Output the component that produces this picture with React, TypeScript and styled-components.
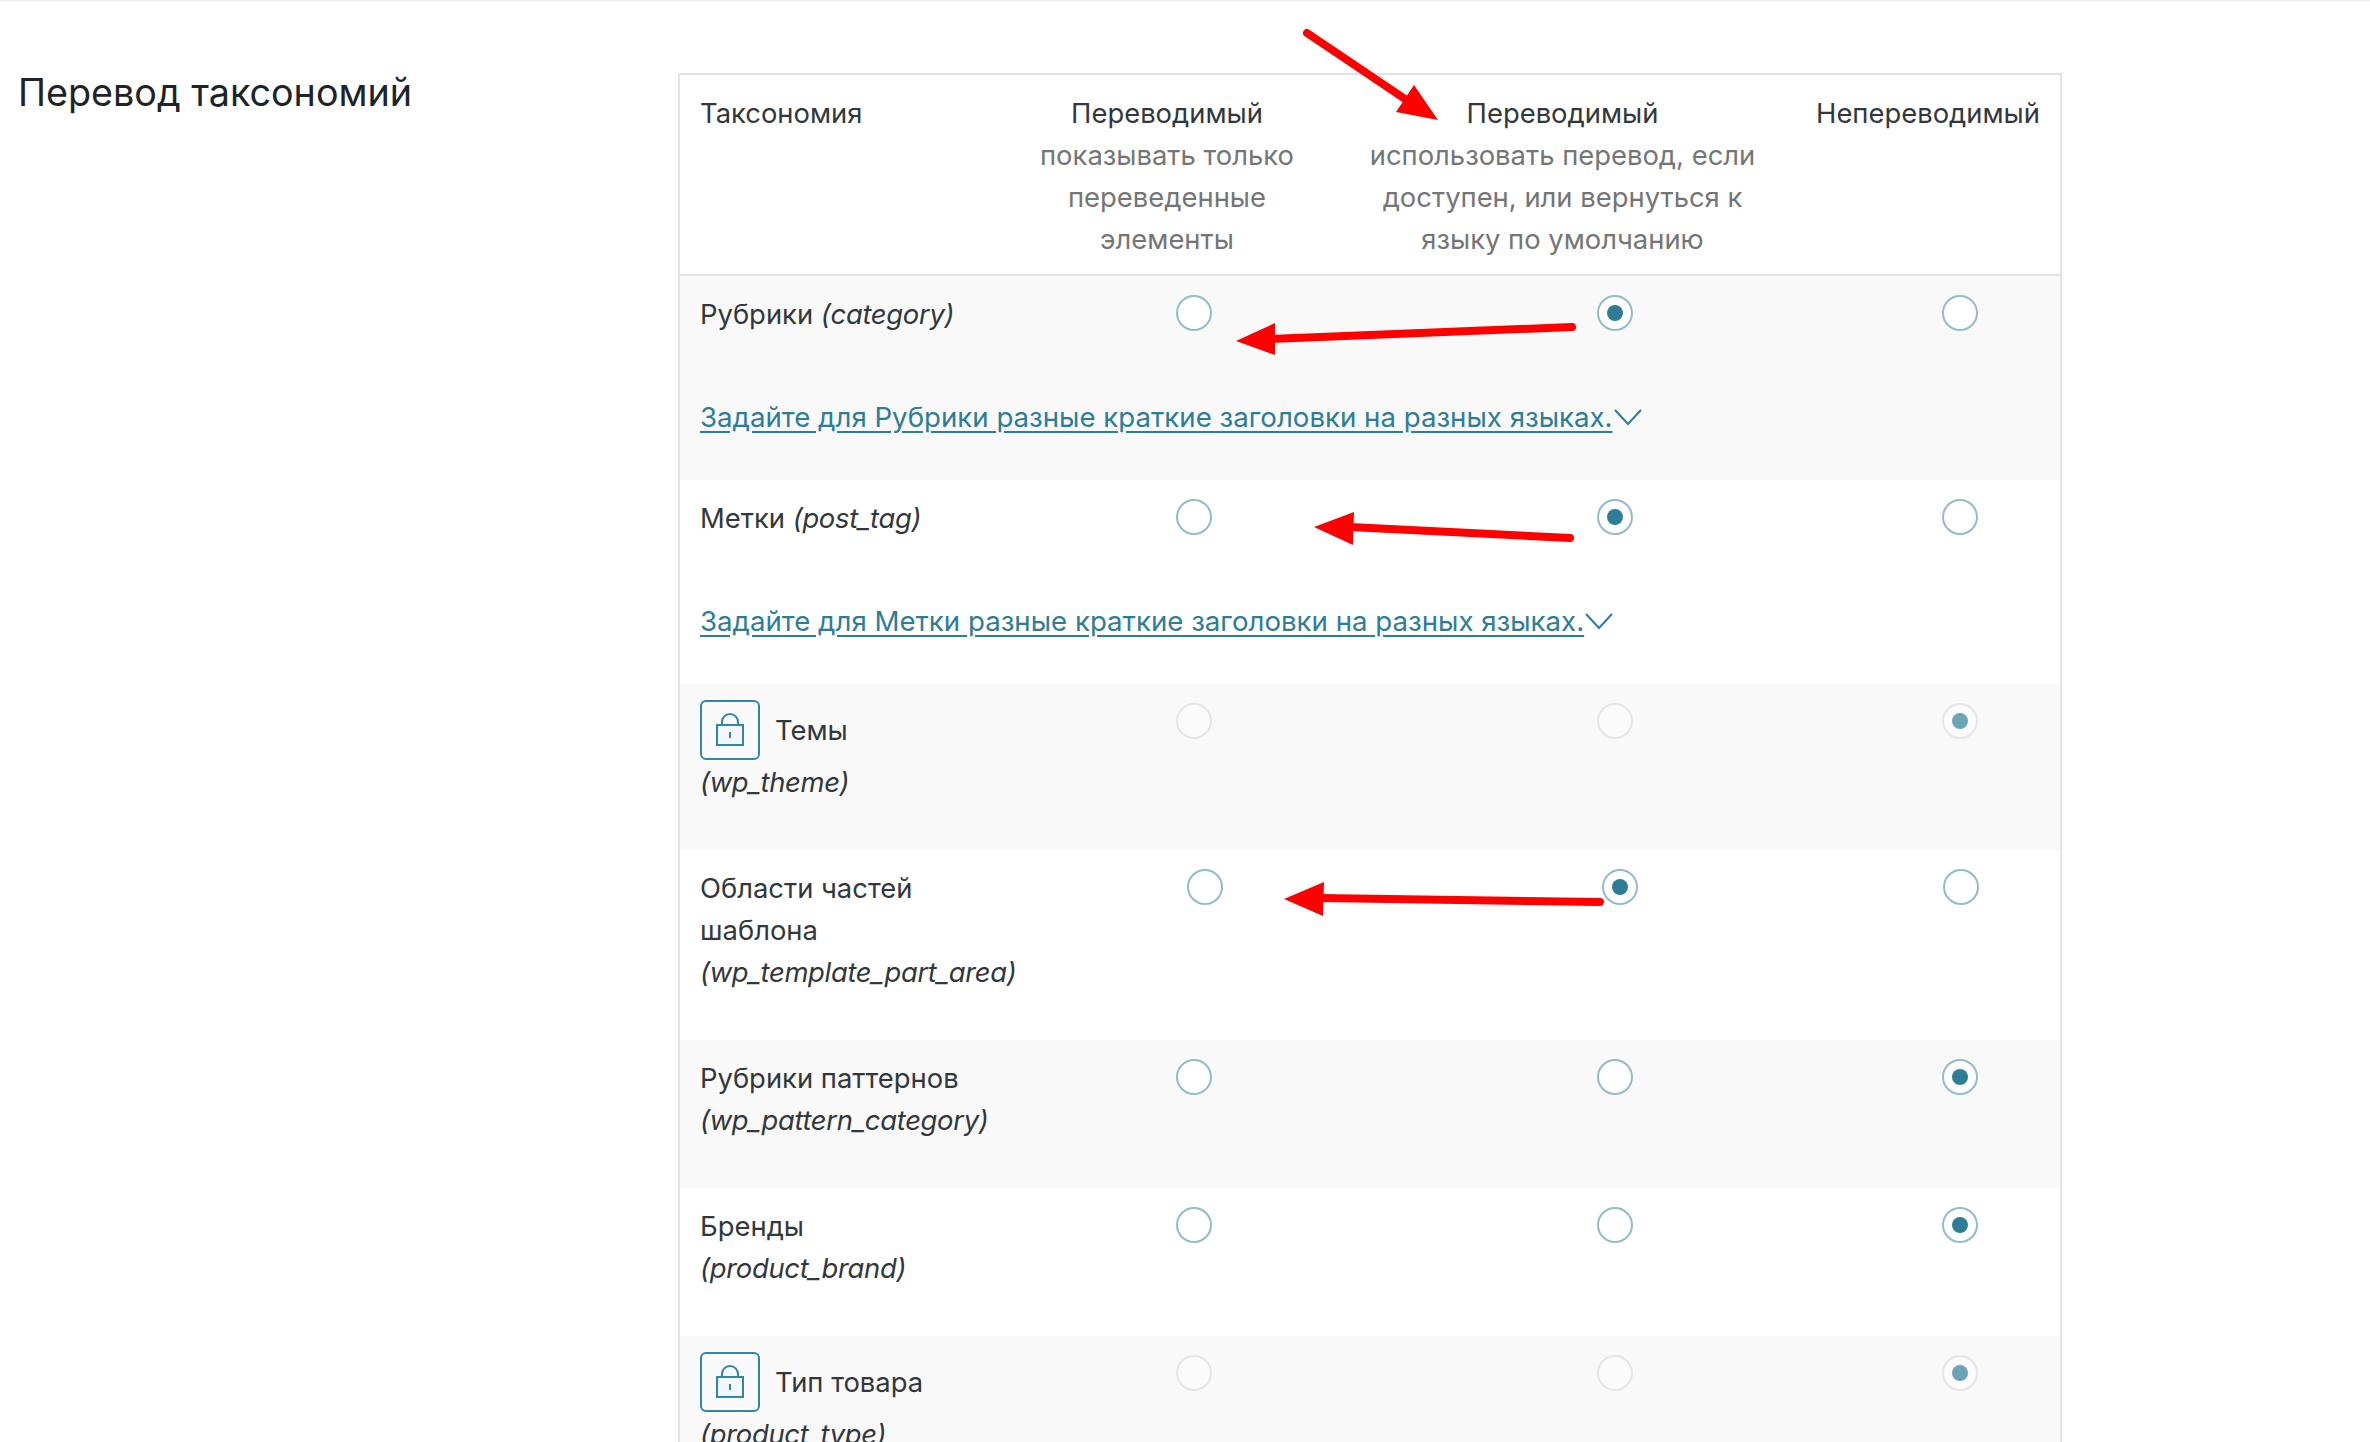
import React from 'react';
import styled, { createGlobalStyle } from 'styled-components';

const GlobalStyle = createGlobalStyle`
  html, body {
    margin: 0;
    padding: 0;
    background: #fff;
    height: 100%;
    overflow: hidden;
  }
  body {
    font-family: Inter, "Liberation Sans", sans-serif;
    -webkit-font-smoothing: antialiased;
  }
`;

const Page = styled.div`
  position: relative;
  display: flex;
  align-items: flex-start;
  width: 2370px;
  height: 1442px;
  box-sizing: border-box;
  padding-top: 72px;
  border-top: 1px solid #ececec;
  overflow: hidden;
`;

const Heading = styled.h2`
  width: 678px;
  box-sizing: border-box;
  flex: none;
  margin: 0;
  padding: 0 0 0 18px;
  font-size: 37.7px;
  line-height: 38px;
  font-weight: 400;
  color: #1d2327;
`;

const Table = styled.div`
  width: 1384px;
  flex: none;
  box-sizing: border-box;
  border: 2px solid #e3e3e3;
  color: #32373c;
  font-size: 27.4px;
  line-height: 42px;

  em {
    letter-spacing: -0.3px;
  }
`;

const HeadRow = styled.div`
  display: grid;
  grid-template-columns: 328px 318px 470px 264px;
  height: 201px;
  box-sizing: border-box;
  padding-top: 17px;
  border-bottom: 2px solid #e3e3e3;
`;

const HeadCell = styled.div<{ $left?: boolean }>`
  padding: 0 20px;
  text-align: ${(p) => (p.$left ? 'left' : 'center')};

  &:nth-child(3) {
    padding-left: 23px;
  }
`;

const HeadNote = styled.div`
  color: #757575;
`;

const Row = styled.div<{ $wide?: boolean }>`
  display: grid;
  grid-template-columns: ${(p) => (p.$wide ? '352px 346px 483px 199px' : '338px 352px 489px 201px')};
  padding: 17.5px 0 46.5px;
  &:nth-child(even) {
    background: #f9f9f9;
  }
`;

const NameCell = styled.div`
  padding: 0 20px;
  margin: -1px 0 1px;
`;

const RadioCell = styled.div`
  display: flex;
  justify-content: center;
  padding-top: 1.5px;
`;

const Radio = styled.input`
  appearance: none;
  display: grid;
  place-items: center;
  width: 36px;
  height: 36px;
  margin: 0;
  box-sizing: border-box;
  border-radius: 50%;
  border: 2px solid #93bccb;
  background: #fff;

  &:checked::before {
    content: '';
    width: 16px;
    height: 16px;
    border-radius: 50%;
    background: #2e7d96;
  }

  &:disabled {
    border-color: #e6e6e6;
    background: #fbfbfb;
  }

  &:disabled:checked::before {
    background: #6ca4b5;
  }
`;

const LinkLine = styled.div`
  grid-column: 1 / -1;
  display: flex;
  align-items: center;
  padding: 0 20px;
  margin: 60px 0 -4px;
  font-size: 27.65px;
`;

const TitleLink = styled.a`
  color: #2e7d96;
  text-decoration: underline;
  text-underline-offset: 4px;
`;

const Chevron = styled.svg`
  width: 30px;
  height: 18px;
  flex: none;
  fill: none;
  stroke: #2e7d96;
  stroke-width: 2;
`;

const LockedName = styled.div`
  display: flex;
  align-items: center;
  gap: 15px;
  height: 60px;
  margin: -1px 0 1px;
`;

const LockBox = styled.span`
  display: grid;
  place-items: center;
  width: 60px;
  height: 60px;
  box-sizing: border-box;
  border: 2px solid #2e87a3;
  border-radius: 6px;
`;

const LockIcon = styled.svg`
  width: 28px;
  height: 33px;
  fill: #f3f7f9;
  stroke: #2e87a3;
  stroke-width: 2;
`;

const Arrows = styled.svg`
  position: absolute;
  left: 0;
  top: 0;
  width: 2370px;
  height: 1442px;
  pointer-events: none;
`;

type Choice = 0 | 1 | 2;

type Taxonomy = {
  name?: string;
  slug: string;
  selected: Choice;
  locked?: boolean;
  wide?: boolean;
  link?: string;
};

const rows: Taxonomy[] = [
  { name: 'Рубрики', slug: 'category', selected: 1, link: 'Задайте для Рубрики разные краткие заголовки на разных языках.' },
  { name: 'Метки', slug: 'post_tag', selected: 1, link: 'Задайте для Метки разные краткие заголовки на разных языках.' },
  { name: 'Темы', slug: 'wp_theme', selected: 2, locked: true },
  { name: 'Области частей шаблона', slug: 'wp_template_part_area', selected: 1, wide: true },
  { name: 'Рубрики паттернов', slug: 'wp_pattern_category', selected: 2 },
  { name: 'Бренды', slug: 'product_brand', selected: 2 },
  { name: 'Тип товара', slug: 'product_type', selected: 2, locked: true },
];

const arrowShafts = [
  { x1: 1307, y1: 32, x2: 1408, y2: 100 },
  { x1: 1572, y1: 326, x2: 1270, y2: 338 },
  { x1: 1570, y1: 537, x2: 1350, y2: 526 },
  { x1: 1600, y1: 901, x2: 1320, y2: 897 },
];

const arrowHeads = [
  '1414,84 1396,111 1438,119',
  '1275,322 1275,354 1236,340',
  '1354,511 1353,544 1314,526',
  '1324,881 1323,915 1284,898',
];

const App = () => (
  <Page>
    <GlobalStyle />
    <Heading>Перевод таксономий</Heading>
    <Table>
      <HeadRow>
        <HeadCell $left>Таксономия</HeadCell>
        <HeadCell>
          Переводимый
          <HeadNote>показывать только переведенные элементы</HeadNote>
        </HeadCell>
        <HeadCell>
          Переводимый
          <HeadNote>использовать перевод, если доступен, или вернуться к языку по умолчанию</HeadNote>
        </HeadCell>
        <HeadCell>Непереводимый</HeadCell>
      </HeadRow>
      {rows.map((row) => (
        <Row key={row.slug} $wide={row.wide}>
          <NameCell>
            {row.locked ? (
              <LockedName>
                <LockBox>
                  <LockIcon viewBox="0 0 28 33">
                    <path d="M6 12V9a8 8 0 0 1 16 0v3" fill="none" />
                    <rect x="1" y="12" width="26" height="20" />
                    <path d="M14 19v6" />
                  </LockIcon>
                </LockBox>
                {row.name}
              </LockedName>
            ) : (
              <>{row.name} </>
            )}
            <em>({row.slug})</em>
          </NameCell>
          {[0, 1, 2].map((i) => (
            <RadioCell key={i}>
              <Radio type="radio" name={row.slug} defaultChecked={row.selected === i} disabled={row.locked} />
            </RadioCell>
          ))}
          {row.link && (
            <LinkLine>
              <TitleLink href="#">{row.link}</TitleLink>
              <Chevron viewBox="0 0 30 18">
                <path d="M2 2l13 14L28 2" />
              </Chevron>
            </LinkLine>
          )}
        </Row>
      ))}
    </Table>
    <Arrows viewBox="0 0 2370 1442">
      {arrowShafts.map((s) => (
        <line key={s.x1} {...s} stroke="#ff0000" strokeWidth="8" strokeLinecap="round" />
      ))}
      {arrowHeads.map((points) => (
        <polygon key={points} points={points} fill="#ff0000" />
      ))}
    </Arrows>
  </Page>
);

export default App;
